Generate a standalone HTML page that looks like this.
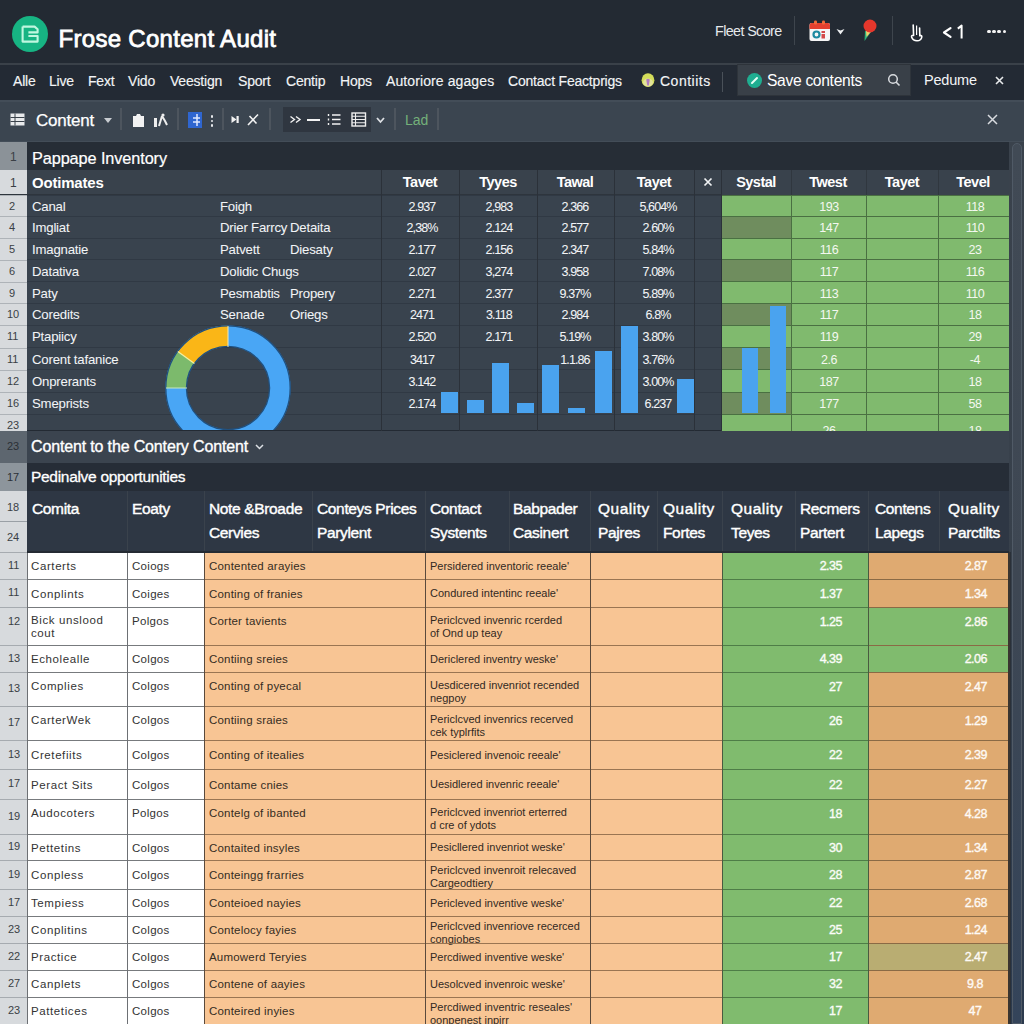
<!DOCTYPE html><html><head><meta charset="utf-8"><style>
*{margin:0;padding:0;box-sizing:border-box}
html,body{width:1024px;height:1024px;overflow:hidden;background:#232a33;font-family:"Liberation Sans",sans-serif;color:#fff}
.a{position:absolute}
.t{position:absolute;white-space:nowrap;line-height:1}
svg{position:absolute;overflow:visible}
</style></head><body>
<div class="a" style="left:0px;top:0px;width:1024px;height:64px;background:#232a33;"></div>
<div class="a" style="left:12px;top:16px;width:36px;height:36px;background:#17b483;border-radius:50%"></div>
<svg style="left:12px;top:16px" width="36" height="36" viewBox="0 0 36 36"><path d="M10.6 10.6 H22.6 L25.6 13.2 V16.4 H16.4 M16.4 20 H25.6 V25.6 H10.6 V10.6" fill="none" stroke="#c0f7e0" stroke-width="2.1" stroke-linejoin="round"/></svg>
<div class="t" style="left:58.5px;top:27px;font-size:24px;color:#fff;letter-spacing:0.3px;-webkit-text-stroke:0.8px #fff">Frose Content Audit</div>
<div class="t" style="left:715px;top:24px;font-size:14.3px;color:#e6e9ec;letter-spacing:-0.6px">Fleet Score</div>
<div class="a" style="left:794px;top:16px;width:1px;height:29px;background:#3e454d;"></div>
<div class="a" style="left:892px;top:16px;width:1px;height:29px;background:#3e454d;"></div>
<svg style="left:808px;top:19px" width="24" height="23" viewBox="0 0 24 23"><rect x="1.5" y="4" width="20.5" height="18" rx="2" fill="#f6f6f6"/><path d="M1.5 10 V6 A2 2 0 0 1 3.5 4 H20 A2 2 0 0 1 22 6 V10 Z" fill="#e5402f"/><rect x="6" y="1.5" width="3" height="4" rx="1.2" fill="#ef6a3a"/><rect x="14" y="1.5" width="3" height="4" rx="1.2" fill="#ef6a3a"/><circle cx="8.5" cy="15.5" r="3" fill="none" stroke="#1e8aa0" stroke-width="2.2"/><rect x="13.5" y="12" width="3.5" height="2" fill="#d44a4a"/><rect x="13.5" y="15" width="3.5" height="4.5" fill="#d44a4a"/></svg>
<svg style="left:836px;top:28px" width="9" height="7" viewBox="0 0 9 7"><path d="M0.5 1 L4.5 2.5 L8.5 1 L4.5 6.5 Z" fill="#eef0f2"/></svg>
<svg style="left:862px;top:18px" width="16" height="25" viewBox="0 0 16 25"><path d="M3 13 L2.5 23 L9 14 Z" fill="#2cb07a"/><path d="M4 13 L4.5 19 L9.5 13 Z" fill="#f0d070"/><circle cx="8" cy="8" r="6.5" fill="#e5372c"/></svg>
<svg style="left:900px;top:15px" width="30" height="32" viewBox="900 15 30 32"><path d="M913.2 25 L913.6 35.5 Q911.2 35 911.6 37 Q913 40.8 917 40.8 Q921.2 40.8 921.8 37 Q922 35.2 919.8 35.8 L919.6 28" fill="none" stroke="#fff" stroke-width="1.6" stroke-linecap="round" stroke-linejoin="round"/><path d="M916.6 25.5 V35" stroke="#fff" stroke-width="1.2"/></svg>
<svg style="left:942px;top:27px" width="10" height="11" viewBox="0 0 10 11"><path d="M8.5 1.2 L2 5.5 L8.5 9.8" fill="none" stroke="#fff" stroke-width="2.2" stroke-linejoin="round" stroke-linecap="round"/></svg>
<svg style="left:950px;top:20px" width="20" height="22" viewBox="950 20 20 22"><path d="M957.8 28.6 L961.6 25.6 V38.4" fill="none" stroke="#fff" stroke-width="2" stroke-linejoin="round"/></svg>
<div class="a" style="left:987.0px;top:29.6px;width:3.6px;height:3.6px;background:#f4f4f4;border-radius:50%"></div>
<div class="a" style="left:992.2px;top:29.6px;width:3.6px;height:3.6px;background:#f4f4f4;border-radius:50%"></div>
<div class="a" style="left:997.4px;top:29.6px;width:3.6px;height:3.6px;background:#f4f4f4;border-radius:50%"></div>
<div class="a" style="left:1002.6px;top:29.6px;width:3.6px;height:3.6px;background:#f4f4f4;border-radius:50%"></div>
<div class="a" style="left:0px;top:64px;width:1024px;height:36px;background:#232a34;"></div>
<div class="a" style="left:0px;top:63px;width:1024px;height:2px;background:#3a4149;"></div>
<div class="t" style="left:13px;top:74px;font-size:14px;color:#f2f4f6;letter-spacing:-0.2px;-webkit-text-stroke:0.15px #f2f4f6">Alle</div>
<div class="t" style="left:49px;top:74px;font-size:14px;color:#f2f4f6;letter-spacing:-0.2px;-webkit-text-stroke:0.15px #f2f4f6">Live</div>
<div class="t" style="left:88px;top:74px;font-size:14px;color:#f2f4f6;letter-spacing:-0.2px;-webkit-text-stroke:0.15px #f2f4f6">Fext</div>
<div class="t" style="left:128px;top:74px;font-size:14px;color:#f2f4f6;letter-spacing:-0.2px;-webkit-text-stroke:0.15px #f2f4f6">Vido</div>
<div class="t" style="left:170px;top:74px;font-size:14px;color:#f2f4f6;letter-spacing:-0.2px;-webkit-text-stroke:0.15px #f2f4f6">Veestign</div>
<div class="t" style="left:238px;top:74px;font-size:14px;color:#f2f4f6;letter-spacing:-0.2px;-webkit-text-stroke:0.15px #f2f4f6">Sport</div>
<div class="t" style="left:286px;top:74px;font-size:14px;color:#f2f4f6;letter-spacing:-0.2px;-webkit-text-stroke:0.15px #f2f4f6">Centip</div>
<div class="t" style="left:340px;top:74px;font-size:14px;color:#f2f4f6;letter-spacing:-0.2px;-webkit-text-stroke:0.15px #f2f4f6">Hops</div>
<div class="t" style="left:386px;top:74px;font-size:14px;color:#f2f4f6;letter-spacing:0.1px;-webkit-text-stroke:0.15px #f2f4f6">Autoriore agages</div>
<div class="t" style="left:508px;top:74px;font-size:14px;color:#f2f4f6;letter-spacing:-0.2px;-webkit-text-stroke:0.15px #f2f4f6">Contact Feactprigs</div>
<svg style="left:641px;top:73px" width="14" height="15" viewBox="0 0 14 15"><ellipse cx="7" cy="7.2" rx="6.4" ry="6.9" fill="#d3dc5a"/><ellipse cx="7" cy="9.5" rx="5" ry="4" fill="#e3e39a"/><path d="M5.2 6.5 Q7 5 8.8 6.5 L7.8 12.5 H6.3 Z" fill="#b07cc0"/></svg>
<div class="t" style="left:660px;top:74px;font-size:14px;color:#f2f4f6;letter-spacing:0.5px;-webkit-text-stroke:0.15px #f2f4f6">Contiits</div>
<div class="a" style="left:722px;top:72px;width:1px;height:20px;background:#4a5159;"></div>
<div class="a" style="left:737px;top:64px;width:174px;height:32px;background:#394048;border:1px solid #2e343b"></div>
<div class="a" style="left:747px;top:73px;width:15px;height:15px;background:#1fae91;border-radius:50%"></div>
<svg style="left:747px;top:73px" width="15" height="15" viewBox="0 0 15 15"><path d="M5 10 L10 5" stroke="#e8fff6" stroke-width="2" stroke-linecap="round"/></svg>
<div class="t" style="left:767px;top:73px;font-size:15.6px;color:#fff;letter-spacing:-0.3px">Save contents</div>
<svg style="left:887px;top:73px" width="14" height="14" viewBox="0 0 14 14"><circle cx="6" cy="6" r="4.3" fill="none" stroke="#d8dbdf" stroke-width="1.5"/><path d="M9 9 L12.5 12.5" stroke="#d8dbdf" stroke-width="1.6"/></svg>
<div class="t" style="left:924px;top:73px;font-size:14.5px;color:#f2f4f6;letter-spacing:-0.2px">Pedume</div>
<svg style="left:995px;top:76px" width="9" height="9" viewBox="0 0 9 9"><path d="M1 1 L8 8 M8 1 L1 8" stroke="#e8eaec" stroke-width="1.6"/></svg>
<div class="a" style="left:0px;top:100px;width:1024px;height:42px;background:#3b4550;"></div>
<div class="a" style="left:0px;top:100px;width:1024px;height:1.5px;background:#434d58;"></div>
<div class="a" style="left:0px;top:140.5px;width:1024px;height:1.5px;background:#434d58;"></div>
<svg style="left:10px;top:113px" width="15" height="13" viewBox="0 0 15 13"><rect x="0.5" y="0.5" width="14" height="12" fill="#e8eaec"/><path d="M0.5 4.5 H14.5 M0.5 8.5 H14.5 M5 0.5 V12.5" stroke="#3a424b" stroke-width="1"/></svg>
<div class="t" style="left:36px;top:112px;font-size:17px;color:#fff;letter-spacing:-0.2px;-webkit-text-stroke:0.25px #fff">Content</div>
<svg style="left:104px;top:118px" width="8" height="5" viewBox="0 0 8 5"><path d="M0 0 H8 L4 5 Z" fill="#c8ccd1"/></svg>
<div class="a" style="left:120px;top:108px;width:1.5px;height:22px;background:#4d555e;"></div>
<div class="a" style="left:177px;top:108px;width:1.5px;height:22px;background:#4d555e;"></div>
<div class="a" style="left:222px;top:108px;width:1.5px;height:22px;background:#4d555e;"></div>
<div class="a" style="left:269px;top:108px;width:1.5px;height:22px;background:#4d555e;"></div>
<div class="a" style="left:394px;top:108px;width:1.5px;height:22px;background:#4d555e;"></div>
<div class="a" style="left:437px;top:108px;width:1.5px;height:22px;background:#4d555e;"></div>
<svg style="left:132px;top:113px" width="13" height="14" viewBox="0 0 13 14"><path d="M1 3 H4 L5 1 H8 L9 3 H12 V14 H1 Z" fill="#f2f2f2"/></svg>
<svg style="left:153px;top:113px" width="16" height="14" viewBox="0 0 16 14"><rect x="1" y="5" width="3" height="9" fill="#eee"/><path d="M6 13 L9 3 M9 3 L12 8 L14 12" stroke="#eee" stroke-width="2" fill="none"/><circle cx="10" cy="2" r="1.6" fill="#eee"/></svg>
<svg style="left:188px;top:112px" width="15" height="16" viewBox="0 0 15 16"><rect x="0" y="0" width="14" height="16" fill="#2f66d0"/><path d="M9 2 V14 M5 6 H12 M5 10 H12" stroke="#dfe8ff" stroke-width="1.5"/></svg>
<div class="a" style="left:210.5px;top:115.0px;width:2.5px;height:2.5px;background:#e8eaec;border-radius:50%"></div>
<div class="a" style="left:210.5px;top:119.5px;width:2.5px;height:2.5px;background:#e8eaec;border-radius:50%"></div>
<div class="a" style="left:210.5px;top:124.0px;width:2.5px;height:2.5px;background:#e8eaec;border-radius:50%"></div>
<svg style="left:231px;top:115px" width="9" height="9" viewBox="0 0 9 9"><path d="M0.5 1 L5.5 4.5 L0.5 8 Z" fill="#f2f2f2"/><rect x="5.5" y="1" width="2.2" height="7" fill="#f2f2f2"/></svg>
<svg style="left:247px;top:113px" width="12" height="13" viewBox="0 0 12 13"><path d="M1 12 L11 1.5 M2.5 3 L9.5 10.5" stroke="#f2f2f2" stroke-width="1.6"/></svg>
<div class="a" style="left:283px;top:107px;width:88px;height:25px;background:#2f3640;"></div>
<svg style="left:289px;top:115px" width="14" height="9" viewBox="0 0 14 9"><path d="M1.5 1.5 L5.5 4.5 L1.5 7.5 M7 1.5 L11 4.5 L7 7.5" fill="none" stroke="#f2f2f2" stroke-width="1.4"/></svg>
<div class="a" style="left:307px;top:119px;width:13px;height:1.6px;background:#f2f2f2;"></div>
<svg style="left:327px;top:113px" width="15" height="13" viewBox="0 0 15 13"><path d="M5 2 H13.5 M5 6.5 H13.5 M5 11 H13.5" stroke="#f2f2f2" stroke-width="1.3"/><path d="M1.5 1 V3 M1.5 5.5 V7.5 M1.5 10 V12" stroke="#f2f2f2" stroke-width="1.4"/></svg>
<svg style="left:351px;top:112px" width="16" height="15" viewBox="0 0 16 15"><rect x="1" y="1" width="13.5" height="13" fill="none" stroke="#eeeeee" stroke-width="1.4"/><path d="M1 4.2 H14.5 M1 7.5 H14.5 M1 10.8 H14.5 M4.5 1 V14" stroke="#eeeeee" stroke-width="1.1"/></svg>
<svg style="left:376px;top:117px" width="9" height="6" viewBox="0 0 9 6"><path d="M1 1 L4.5 5 L8 1" fill="none" stroke="#dde0e4" stroke-width="1.8"/></svg>
<div class="t" style="left:405px;top:113px;font-size:14px;color:#74b07a;">Lad</div>
<svg style="left:987px;top:114px" width="11" height="11" viewBox="0 0 11 11"><path d="M1 1 L10 10 M10 1 L1 10" stroke="#d8dbdf" stroke-width="1.5"/></svg>
<div class="a" style="left:0px;top:142px;width:1009px;height:28px;background:#262d36;"></div>
<div class="a" style="left:0px;top:142px;width:27px;height:28px;background:#8b9298;"></div>
<div class="t" style="left:10px;top:151px;font-size:12px;color:#3a3f45;">1</div>
<div class="t" style="left:32px;top:150px;font-size:16.3px;color:#fff;letter-spacing:-0.1px;-webkit-text-stroke:0.2px #fff">Pappape Inventory</div>
<div class="a" style="left:27px;top:170px;width:695px;height:260px;background:#39434e;"></div>
<div class="a" style="left:27px;top:170px;width:695px;height:25px;background:#39424c;"></div>
<div class="a" style="left:0px;top:170px;width:27px;height:25px;background:#d7dadd;"></div>
<div class="t" style="left:32px;top:175px;font-size:15px;color:#fff;font-weight:bold;letter-spacing:-0.2px">Ootimates</div>
<div class="t" style="left:10px;top:177px;font-size:12px;color:#3a3f45;">1</div>
<div class="a" style="left:0px;top:195px;width:27px;height:21px;background:#d7dadd;"></div>
<div class="a" style="left:0px;top:195px;width:27px;height:1px;background:#aeb3b8;"></div>
<div class="t" style="left:9px;top:201px;font-size:11px;color:#3a3f45;">2</div>
<div class="a" style="left:27px;top:194.5px;width:695px;height:1.2px;background:#303944;"></div>
<div class="a" style="left:0px;top:216px;width:27px;height:22px;background:#d7dadd;"></div>
<div class="a" style="left:0px;top:216px;width:27px;height:1px;background:#aeb3b8;"></div>
<div class="t" style="left:9px;top:222px;font-size:11px;color:#3a3f45;">4</div>
<div class="a" style="left:27px;top:215.5px;width:695px;height:1.2px;background:#303944;"></div>
<div class="a" style="left:0px;top:238px;width:27px;height:21.5px;background:#d7dadd;"></div>
<div class="a" style="left:0px;top:238px;width:27px;height:1px;background:#aeb3b8;"></div>
<div class="t" style="left:9px;top:244px;font-size:11px;color:#3a3f45;">5</div>
<div class="a" style="left:27px;top:237.5px;width:695px;height:1.2px;background:#303944;"></div>
<div class="a" style="left:0px;top:259.5px;width:27px;height:22.0px;background:#d7dadd;"></div>
<div class="a" style="left:0px;top:259.5px;width:27px;height:1px;background:#aeb3b8;"></div>
<div class="t" style="left:9px;top:265.5px;font-size:11px;color:#3a3f45;">6</div>
<div class="a" style="left:27px;top:259.0px;width:695px;height:1.2px;background:#303944;"></div>
<div class="a" style="left:0px;top:281.5px;width:27px;height:21.5px;background:#d7dadd;"></div>
<div class="a" style="left:0px;top:281.5px;width:27px;height:1px;background:#aeb3b8;"></div>
<div class="t" style="left:9px;top:287.5px;font-size:11px;color:#3a3f45;">9</div>
<div class="a" style="left:27px;top:281.0px;width:695px;height:1.2px;background:#303944;"></div>
<div class="a" style="left:0px;top:303px;width:27px;height:22px;background:#d7dadd;"></div>
<div class="a" style="left:0px;top:303px;width:27px;height:1px;background:#aeb3b8;"></div>
<div class="t" style="left:7px;top:309px;font-size:11px;color:#3a3f45;">10</div>
<div class="a" style="left:27px;top:302.5px;width:695px;height:1.2px;background:#303944;"></div>
<div class="a" style="left:0px;top:325px;width:27px;height:22.5px;background:#d7dadd;"></div>
<div class="a" style="left:0px;top:325px;width:27px;height:1px;background:#aeb3b8;"></div>
<div class="t" style="left:7px;top:331px;font-size:11px;color:#3a3f45;">11</div>
<div class="a" style="left:27px;top:324.5px;width:695px;height:1.2px;background:#303944;"></div>
<div class="a" style="left:0px;top:347.5px;width:27px;height:22.0px;background:#d7dadd;"></div>
<div class="a" style="left:0px;top:347.5px;width:27px;height:1px;background:#aeb3b8;"></div>
<div class="t" style="left:7px;top:353.5px;font-size:11px;color:#3a3f45;">11</div>
<div class="a" style="left:27px;top:347.0px;width:695px;height:1.2px;background:#303944;"></div>
<div class="a" style="left:0px;top:369.5px;width:27px;height:22.5px;background:#d7dadd;"></div>
<div class="a" style="left:0px;top:369.5px;width:27px;height:1px;background:#aeb3b8;"></div>
<div class="t" style="left:7px;top:375.5px;font-size:11px;color:#3a3f45;">12</div>
<div class="a" style="left:27px;top:369.0px;width:695px;height:1.2px;background:#303944;"></div>
<div class="a" style="left:0px;top:392px;width:27px;height:22px;background:#d7dadd;"></div>
<div class="a" style="left:0px;top:392px;width:27px;height:1px;background:#aeb3b8;"></div>
<div class="t" style="left:7px;top:398px;font-size:11px;color:#3a3f45;">16</div>
<div class="a" style="left:27px;top:391.5px;width:695px;height:1.2px;background:#303944;"></div>
<div class="a" style="left:0px;top:414px;width:27px;height:17px;background:#d7dadd;"></div>
<div class="a" style="left:0px;top:414px;width:27px;height:1px;background:#aeb3b8;"></div>
<div class="t" style="left:7px;top:420px;font-size:11px;color:#3a3f45;">23</div>
<div class="a" style="left:27px;top:413.5px;width:695px;height:1.2px;background:#303944;"></div>
<div class="a" style="left:0px;top:194px;width:1009px;height:1px;background:#2e353d;"></div>
<div class="a" style="left:381px;top:170px;width:1.2px;height:261px;background:#2b3139;"></div>
<div class="a" style="left:459px;top:170px;width:1.2px;height:261px;background:#2b3139;"></div>
<div class="a" style="left:537px;top:170px;width:1.2px;height:261px;background:#2b3139;"></div>
<div class="a" style="left:614px;top:170px;width:1.2px;height:261px;background:#2b3139;"></div>
<div class="a" style="left:694px;top:170px;width:1.2px;height:261px;background:#2b3139;"></div>
<div class="a" style="left:721px;top:170px;width:1.2px;height:261px;background:#2b3139;"></div>
<div class="t" style="left:320px;width:200px;text-align:center;top:175px;font-size:14.5px;color:#fff;font-weight:bold;letter-spacing:-0.5px">Tavet</div>
<div class="t" style="left:398px;width:200px;text-align:center;top:175px;font-size:14.5px;color:#fff;font-weight:bold;letter-spacing:-0.5px">Tyyes</div>
<div class="t" style="left:475px;width:200px;text-align:center;top:175px;font-size:14.5px;color:#fff;font-weight:bold;letter-spacing:-0.5px">Tawal</div>
<div class="t" style="left:554px;width:200px;text-align:center;top:175px;font-size:14.5px;color:#fff;font-weight:bold;letter-spacing:-0.5px">Tayet</div>
<svg style="left:703px;top:177px" width="10" height="10" viewBox="0 0 10 10"><path d="M1.5 1.5 L8.5 8.5 M8.5 1.5 L1.5 8.5" stroke="#f0f2f4" stroke-width="1.7"/></svg>
<div class="t" style="left:32px;top:200px;font-size:13.2px;color:#f2f4f6;letter-spacing:-0.2px;-webkit-text-stroke:0.05px #f2f4f6">Canal</div>
<div class="t" style="left:32px;top:221px;font-size:13.2px;color:#f2f4f6;letter-spacing:-0.2px;-webkit-text-stroke:0.05px #f2f4f6">Imgliat</div>
<div class="t" style="left:32px;top:243px;font-size:13.2px;color:#f2f4f6;letter-spacing:-0.2px;-webkit-text-stroke:0.05px #f2f4f6">Imagnatie</div>
<div class="t" style="left:32px;top:264.5px;font-size:13.2px;color:#f2f4f6;letter-spacing:-0.2px;-webkit-text-stroke:0.05px #f2f4f6">Datativa</div>
<div class="t" style="left:32px;top:286.5px;font-size:13.2px;color:#f2f4f6;letter-spacing:-0.2px;-webkit-text-stroke:0.05px #f2f4f6">Paty</div>
<div class="t" style="left:32px;top:308px;font-size:13.2px;color:#f2f4f6;letter-spacing:-0.2px;-webkit-text-stroke:0.05px #f2f4f6">Coredits</div>
<div class="t" style="left:32px;top:330px;font-size:13.2px;color:#f2f4f6;letter-spacing:-0.2px;-webkit-text-stroke:0.05px #f2f4f6">Ptapiicy</div>
<div class="t" style="left:32px;top:352.5px;font-size:13.2px;color:#f2f4f6;letter-spacing:-0.2px;-webkit-text-stroke:0.05px #f2f4f6">Corent tafanice</div>
<div class="t" style="left:32px;top:374.5px;font-size:13.2px;color:#f2f4f6;letter-spacing:-0.2px;-webkit-text-stroke:0.05px #f2f4f6">Onprerants</div>
<div class="t" style="left:32px;top:397px;font-size:13.2px;color:#f2f4f6;letter-spacing:-0.2px;-webkit-text-stroke:0.05px #f2f4f6">Smeprists</div>
<div class="t" style="left:220px;top:200px;font-size:13.2px;color:#f2f4f6;letter-spacing:-0.2px;-webkit-text-stroke:0.05px #f2f4f6">Foigh</div>
<div class="t" style="left:220px;top:221px;font-size:13.2px;color:#f2f4f6;letter-spacing:-0.2px;-webkit-text-stroke:0.05px #f2f4f6">Drier Farrcy</div>
<div class="t" style="left:290px;top:221px;font-size:13.2px;color:#f2f4f6;letter-spacing:-0.2px;-webkit-text-stroke:0.05px #f2f4f6">Detaita</div>
<div class="t" style="left:220px;top:243px;font-size:13.2px;color:#f2f4f6;letter-spacing:-0.2px;-webkit-text-stroke:0.05px #f2f4f6">Patvett</div>
<div class="t" style="left:290px;top:243px;font-size:13.2px;color:#f2f4f6;letter-spacing:-0.2px;-webkit-text-stroke:0.05px #f2f4f6">Diesaty</div>
<div class="t" style="left:220px;top:264.5px;font-size:13.2px;color:#f2f4f6;letter-spacing:-0.2px;-webkit-text-stroke:0.05px #f2f4f6">Dolidic Chugs</div>
<div class="t" style="left:220px;top:286.5px;font-size:13.2px;color:#f2f4f6;letter-spacing:-0.2px;-webkit-text-stroke:0.05px #f2f4f6">Pesmabtis</div>
<div class="t" style="left:290px;top:286.5px;font-size:13.2px;color:#f2f4f6;letter-spacing:-0.2px;-webkit-text-stroke:0.05px #f2f4f6">Propery</div>
<div class="t" style="left:220px;top:308px;font-size:13.2px;color:#f2f4f6;letter-spacing:-0.2px;-webkit-text-stroke:0.05px #f2f4f6">Senade</div>
<div class="t" style="left:290px;top:308px;font-size:13.2px;color:#f2f4f6;letter-spacing:-0.2px;-webkit-text-stroke:0.05px #f2f4f6">Oriegs</div>
<div class="t" style="left:322px;width:200px;text-align:center;top:201px;font-size:12.5px;color:#f2f4f6;letter-spacing:-0.9px;-webkit-text-stroke:0.05px #f2f4f6">2.937</div>
<div class="t" style="left:399px;width:200px;text-align:center;top:201px;font-size:12.5px;color:#f2f4f6;letter-spacing:-0.9px;-webkit-text-stroke:0.05px #f2f4f6">2,983</div>
<div class="t" style="left:475px;width:200px;text-align:center;top:201px;font-size:12.5px;color:#f2f4f6;letter-spacing:-0.9px;-webkit-text-stroke:0.05px #f2f4f6">2.366</div>
<div class="t" style="left:558px;width:200px;text-align:center;top:201px;font-size:12.5px;color:#f2f4f6;letter-spacing:-0.9px;-webkit-text-stroke:0.05px #f2f4f6">5,604%</div>
<div class="t" style="left:322px;width:200px;text-align:center;top:222px;font-size:12.5px;color:#f2f4f6;letter-spacing:-0.9px;-webkit-text-stroke:0.05px #f2f4f6">2,38%</div>
<div class="t" style="left:399px;width:200px;text-align:center;top:222px;font-size:12.5px;color:#f2f4f6;letter-spacing:-0.9px;-webkit-text-stroke:0.05px #f2f4f6">2.124</div>
<div class="t" style="left:475px;width:200px;text-align:center;top:222px;font-size:12.5px;color:#f2f4f6;letter-spacing:-0.9px;-webkit-text-stroke:0.05px #f2f4f6">2.577</div>
<div class="t" style="left:558px;width:200px;text-align:center;top:222px;font-size:12.5px;color:#f2f4f6;letter-spacing:-0.9px;-webkit-text-stroke:0.05px #f2f4f6">2.60%</div>
<div class="t" style="left:322px;width:200px;text-align:center;top:244px;font-size:12.5px;color:#f2f4f6;letter-spacing:-0.9px;-webkit-text-stroke:0.05px #f2f4f6">2.177</div>
<div class="t" style="left:399px;width:200px;text-align:center;top:244px;font-size:12.5px;color:#f2f4f6;letter-spacing:-0.9px;-webkit-text-stroke:0.05px #f2f4f6">2.156</div>
<div class="t" style="left:475px;width:200px;text-align:center;top:244px;font-size:12.5px;color:#f2f4f6;letter-spacing:-0.9px;-webkit-text-stroke:0.05px #f2f4f6">2.347</div>
<div class="t" style="left:558px;width:200px;text-align:center;top:244px;font-size:12.5px;color:#f2f4f6;letter-spacing:-0.9px;-webkit-text-stroke:0.05px #f2f4f6">5.84%</div>
<div class="t" style="left:322px;width:200px;text-align:center;top:265.5px;font-size:12.5px;color:#f2f4f6;letter-spacing:-0.9px;-webkit-text-stroke:0.05px #f2f4f6">2.027</div>
<div class="t" style="left:399px;width:200px;text-align:center;top:265.5px;font-size:12.5px;color:#f2f4f6;letter-spacing:-0.9px;-webkit-text-stroke:0.05px #f2f4f6">3,274</div>
<div class="t" style="left:475px;width:200px;text-align:center;top:265.5px;font-size:12.5px;color:#f2f4f6;letter-spacing:-0.9px;-webkit-text-stroke:0.05px #f2f4f6">3.958</div>
<div class="t" style="left:558px;width:200px;text-align:center;top:265.5px;font-size:12.5px;color:#f2f4f6;letter-spacing:-0.9px;-webkit-text-stroke:0.05px #f2f4f6">7.08%</div>
<div class="t" style="left:322px;width:200px;text-align:center;top:287.5px;font-size:12.5px;color:#f2f4f6;letter-spacing:-0.9px;-webkit-text-stroke:0.05px #f2f4f6">2.271</div>
<div class="t" style="left:399px;width:200px;text-align:center;top:287.5px;font-size:12.5px;color:#f2f4f6;letter-spacing:-0.9px;-webkit-text-stroke:0.05px #f2f4f6">2.377</div>
<div class="t" style="left:475px;width:200px;text-align:center;top:287.5px;font-size:12.5px;color:#f2f4f6;letter-spacing:-0.9px;-webkit-text-stroke:0.05px #f2f4f6">9.37%</div>
<div class="t" style="left:558px;width:200px;text-align:center;top:287.5px;font-size:12.5px;color:#f2f4f6;letter-spacing:-0.9px;-webkit-text-stroke:0.05px #f2f4f6">5.89%</div>
<div class="t" style="left:322px;width:200px;text-align:center;top:309px;font-size:12.5px;color:#f2f4f6;letter-spacing:-0.9px;-webkit-text-stroke:0.05px #f2f4f6">2471</div>
<div class="t" style="left:399px;width:200px;text-align:center;top:309px;font-size:12.5px;color:#f2f4f6;letter-spacing:-0.9px;-webkit-text-stroke:0.05px #f2f4f6">3.118</div>
<div class="t" style="left:475px;width:200px;text-align:center;top:309px;font-size:12.5px;color:#f2f4f6;letter-spacing:-0.9px;-webkit-text-stroke:0.05px #f2f4f6">2.984</div>
<div class="t" style="left:558px;width:200px;text-align:center;top:309px;font-size:12.5px;color:#f2f4f6;letter-spacing:-0.9px;-webkit-text-stroke:0.05px #f2f4f6">6.8%</div>
<div class="t" style="left:322px;width:200px;text-align:center;top:331px;font-size:12.5px;color:#f2f4f6;letter-spacing:-0.9px;-webkit-text-stroke:0.05px #f2f4f6">2.520</div>
<div class="t" style="left:399px;width:200px;text-align:center;top:331px;font-size:12.5px;color:#f2f4f6;letter-spacing:-0.9px;-webkit-text-stroke:0.05px #f2f4f6">2.171</div>
<div class="t" style="left:475px;width:200px;text-align:center;top:331px;font-size:12.5px;color:#f2f4f6;letter-spacing:-0.9px;-webkit-text-stroke:0.05px #f2f4f6">5.19%</div>
<div class="t" style="left:558px;width:200px;text-align:center;top:331px;font-size:12.5px;color:#f2f4f6;letter-spacing:-0.9px;-webkit-text-stroke:0.05px #f2f4f6">3.80%</div>
<div class="t" style="left:322px;width:200px;text-align:center;top:353.5px;font-size:12.5px;color:#f2f4f6;letter-spacing:-0.9px;-webkit-text-stroke:0.05px #f2f4f6">3417</div>
<div class="t" style="left:475px;width:200px;text-align:center;top:353.5px;font-size:12.5px;color:#f2f4f6;letter-spacing:-0.9px;-webkit-text-stroke:0.05px #f2f4f6">1.1.86</div>
<div class="t" style="left:558px;width:200px;text-align:center;top:353.5px;font-size:12.5px;color:#f2f4f6;letter-spacing:-0.9px;-webkit-text-stroke:0.05px #f2f4f6">3.76%</div>
<div class="t" style="left:322px;width:200px;text-align:center;top:375.5px;font-size:12.5px;color:#f2f4f6;letter-spacing:-0.9px;-webkit-text-stroke:0.05px #f2f4f6">3.142</div>
<div class="t" style="left:558px;width:200px;text-align:center;top:375.5px;font-size:12.5px;color:#f2f4f6;letter-spacing:-0.9px;-webkit-text-stroke:0.05px #f2f4f6">3.00%</div>
<div class="t" style="left:322px;width:200px;text-align:center;top:398px;font-size:12.5px;color:#f2f4f6;letter-spacing:-0.9px;-webkit-text-stroke:0.05px #f2f4f6">2.174</div>
<div class="t" style="left:558px;width:200px;text-align:center;top:398px;font-size:12.5px;color:#f2f4f6;letter-spacing:-0.9px;-webkit-text-stroke:0.05px #f2f4f6">6.237</div>
<div class="a" style="left:27px;top:170px;width:695px;height:260px;overflow:hidden"><svg style="left:139px;top:156px" width="124" height="124" viewBox="-62 -62 124 124"><circle r="52" fill="none" stroke="#49a6f5" stroke-width="21"/><path d="M -52 0 A 52 52 0 0 1 -42.1 -30.6" fill="none" stroke="#7cba6c" stroke-width="21"/><path d="M -42.1 -30.6 A 52 52 0 0 1 0 -52" fill="none" stroke="#fab617" stroke-width="21"/><circle r="62.2" fill="none" stroke="#21507e" stroke-width="1.3"/><circle r="41.6" fill="none" stroke="#21507e" stroke-width="1.3"/><path d="M -62 0 H -41" stroke="#c8e8c0" stroke-width="1"/><path d="M -50.2 -36.5 L -33.6 -24.4" stroke="#f5f0a0" stroke-width="1.2"/><path d="M 0 -62 V -41" stroke="#f5e8b0" stroke-width="1"/></svg></div>
<div class="a" style="left:441px;top:392px;width:16.5px;height:21px;background:#4aa3ef;"></div>
<div class="a" style="left:467px;top:400px;width:16.5px;height:13px;background:#4aa3ef;"></div>
<div class="a" style="left:492px;top:363px;width:16.5px;height:50px;background:#4aa3ef;"></div>
<div class="a" style="left:517px;top:403px;width:16.5px;height:10px;background:#4aa3ef;"></div>
<div class="a" style="left:542px;top:365px;width:16.5px;height:48px;background:#4aa3ef;"></div>
<div class="a" style="left:568px;top:408px;width:16.5px;height:5px;background:#4aa3ef;"></div>
<div class="a" style="left:595px;top:351px;width:16.5px;height:62px;background:#4aa3ef;"></div>
<div class="a" style="left:621px;top:326px;width:16.5px;height:87px;background:#4aa3ef;"></div>
<div class="a" style="left:677px;top:379px;width:16.5px;height:34px;background:#4aa3ef;"></div>
<div class="a" style="left:722px;top:170px;width:287px;height:25px;background:#39424c;"></div>
<div class="t" style="left:656px;width:200px;text-align:center;top:175px;font-size:14.5px;color:#fff;font-weight:bold;letter-spacing:-0.5px">Systal</div>
<div class="t" style="left:728px;width:200px;text-align:center;top:175px;font-size:14.5px;color:#fff;font-weight:bold;letter-spacing:-0.5px">Twest</div>
<div class="t" style="left:802px;width:200px;text-align:center;top:175px;font-size:14.5px;color:#fff;font-weight:bold;letter-spacing:-0.5px">Tayet</div>
<div class="t" style="left:873px;width:200px;text-align:center;top:175px;font-size:14.5px;color:#fff;font-weight:bold;letter-spacing:-0.5px">Tevel</div>
<div class="a" style="left:791px;top:170px;width:1px;height:25px;background:#30373f;"></div>
<div class="a" style="left:866px;top:170px;width:1px;height:25px;background:#30373f;"></div>
<div class="a" style="left:938px;top:170px;width:1px;height:25px;background:#30373f;"></div>
<div class="a" style="left:722px;top:195px;width:287px;height:236px;background:#80ba6e;"></div>
<div class="a" style="left:722px;top:216px;width:69px;height:22px;background:#6f8d5e;"></div>
<div class="a" style="left:722px;top:259.5px;width:69px;height:22.0px;background:#6f8d5e;"></div>
<div class="a" style="left:722px;top:303px;width:69px;height:22px;background:#6f8d5e;"></div>
<div class="a" style="left:722px;top:347.5px;width:69px;height:22.0px;background:#6f8d5e;"></div>
<div class="a" style="left:722px;top:392px;width:69px;height:22px;background:#6f8d5e;"></div>
<div class="a" style="left:722px;top:194.5px;width:287px;height:1.3px;background:#4a7042;"></div>
<div class="a" style="left:722px;top:215.5px;width:287px;height:1.3px;background:#4a7042;"></div>
<div class="a" style="left:722px;top:237.5px;width:287px;height:1.3px;background:#4a7042;"></div>
<div class="a" style="left:722px;top:259.0px;width:287px;height:1.3px;background:#4a7042;"></div>
<div class="a" style="left:722px;top:281.0px;width:287px;height:1.3px;background:#4a7042;"></div>
<div class="a" style="left:722px;top:302.5px;width:287px;height:1.3px;background:#4a7042;"></div>
<div class="a" style="left:722px;top:324.5px;width:287px;height:1.3px;background:#4a7042;"></div>
<div class="a" style="left:722px;top:347.0px;width:287px;height:1.3px;background:#4a7042;"></div>
<div class="a" style="left:722px;top:369.0px;width:287px;height:1.3px;background:#4a7042;"></div>
<div class="a" style="left:722px;top:391.5px;width:287px;height:1.3px;background:#4a7042;"></div>
<div class="a" style="left:722px;top:413.5px;width:287px;height:1.3px;background:#4a7042;"></div>
<div class="a" style="left:791px;top:195px;width:1.3px;height:236px;background:#4a7042;"></div>
<div class="a" style="left:866px;top:195px;width:1.3px;height:236px;background:#4a7042;"></div>
<div class="a" style="left:938px;top:195px;width:1.3px;height:236px;background:#4a7042;"></div>
<div class="t" style="left:729px;width:200px;text-align:center;top:201px;font-size:12.5px;color:#f4f8f0;letter-spacing:-0.4px">193</div>
<div class="t" style="left:875px;width:200px;text-align:center;top:201px;font-size:12.5px;color:#f4f8f0;letter-spacing:-0.4px">118</div>
<div class="t" style="left:729px;width:200px;text-align:center;top:222px;font-size:12.5px;color:#f4f8f0;letter-spacing:-0.4px">147</div>
<div class="t" style="left:875px;width:200px;text-align:center;top:222px;font-size:12.5px;color:#f4f8f0;letter-spacing:-0.4px">110</div>
<div class="t" style="left:729px;width:200px;text-align:center;top:244px;font-size:12.5px;color:#f4f8f0;letter-spacing:-0.4px">116</div>
<div class="t" style="left:875px;width:200px;text-align:center;top:244px;font-size:12.5px;color:#f4f8f0;letter-spacing:-0.4px">23</div>
<div class="t" style="left:729px;width:200px;text-align:center;top:265.5px;font-size:12.5px;color:#f4f8f0;letter-spacing:-0.4px">117</div>
<div class="t" style="left:875px;width:200px;text-align:center;top:265.5px;font-size:12.5px;color:#f4f8f0;letter-spacing:-0.4px">116</div>
<div class="t" style="left:729px;width:200px;text-align:center;top:287.5px;font-size:12.5px;color:#f4f8f0;letter-spacing:-0.4px">113</div>
<div class="t" style="left:875px;width:200px;text-align:center;top:287.5px;font-size:12.5px;color:#f4f8f0;letter-spacing:-0.4px">110</div>
<div class="t" style="left:729px;width:200px;text-align:center;top:309px;font-size:12.5px;color:#f4f8f0;letter-spacing:-0.4px">117</div>
<div class="t" style="left:875px;width:200px;text-align:center;top:309px;font-size:12.5px;color:#f4f8f0;letter-spacing:-0.4px">18</div>
<div class="t" style="left:729px;width:200px;text-align:center;top:331px;font-size:12.5px;color:#f4f8f0;letter-spacing:-0.4px">119</div>
<div class="t" style="left:875px;width:200px;text-align:center;top:331px;font-size:12.5px;color:#f4f8f0;letter-spacing:-0.4px">29</div>
<div class="t" style="left:729px;width:200px;text-align:center;top:353.5px;font-size:12.5px;color:#f4f8f0;letter-spacing:-0.4px">2.6</div>
<div class="t" style="left:875px;width:200px;text-align:center;top:353.5px;font-size:12.5px;color:#f4f8f0;letter-spacing:-0.4px">-4</div>
<div class="t" style="left:729px;width:200px;text-align:center;top:375.5px;font-size:12.5px;color:#f4f8f0;letter-spacing:-0.4px">187</div>
<div class="t" style="left:875px;width:200px;text-align:center;top:375.5px;font-size:12.5px;color:#f4f8f0;letter-spacing:-0.4px">18</div>
<div class="t" style="left:729px;width:200px;text-align:center;top:398px;font-size:12.5px;color:#f4f8f0;letter-spacing:-0.4px">177</div>
<div class="t" style="left:875px;width:200px;text-align:center;top:398px;font-size:12.5px;color:#f4f8f0;letter-spacing:-0.4px">58</div>
<div class="t" style="left:729px;width:200px;text-align:center;top:425px;font-size:12.5px;color:#f4f8f0;letter-spacing:-0.4px">26</div>
<div class="t" style="left:875px;width:200px;text-align:center;top:425px;font-size:12.5px;color:#f4f8f0;letter-spacing:-0.4px">18</div>
<div class="a" style="left:742px;top:348px;width:16px;height:65px;background:#4aa3ef;"></div>
<div class="a" style="left:770px;top:306px;width:16px;height:107px;background:#4aa3ef;"></div>
<div class="a" style="left:1009px;top:142px;width:15px;height:882px;background:linear-gradient(#3a424c,#37404b 50%,#2c3a4d);"></div>
<div class="a" style="left:1009px;top:552px;width:2px;height:472px;background:#2a3038;"></div>
<div class="a" style="left:1012px;top:143px;width:10px;height:881px;background:linear-gradient(#414a55,#3e4753 50%,#34445a);border-radius:5px 5px 0 0;border:1px solid #505a66"></div>
<div class="a" style="left:0px;top:431px;width:1009px;height:32px;background:#3b444f;"></div>
<div class="a" style="left:0px;top:431px;width:27px;height:32px;background:#5d666f;"></div>
<div class="t" style="left:7px;top:441px;font-size:11px;color:#2b3036;">23</div>
<div class="t" style="left:31px;top:439px;font-size:16px;color:#fff;letter-spacing:-0.15px;-webkit-text-stroke:0.35px #fff">Content to the Contery Content</div>
<svg style="left:255px;top:444px" width="9" height="6" viewBox="0 0 9 6"><path d="M1 1 L4.5 4.5 L8 1" fill="none" stroke="#dde0e4" stroke-width="1.5"/></svg>
<div class="a" style="left:0px;top:463px;width:1009px;height:28px;background:#262d37;"></div>
<div class="a" style="left:0px;top:463px;width:27px;height:28px;background:#8d959c;"></div>
<div class="t" style="left:7px;top:472px;font-size:11px;color:#2b3036;">17</div>
<div class="t" style="left:31px;top:469px;font-size:15.5px;color:#fff;letter-spacing:-0.3px;-webkit-text-stroke:0.3px #fff">Pedinalve opportunities</div>
<div class="a" style="left:0px;top:491px;width:1009px;height:61px;background:#2e3744;"></div>
<div class="a" style="left:0px;top:491px;width:27px;height:30px;background:#d7dadd;"></div>
<div class="a" style="left:0px;top:521px;width:27px;height:31px;background:#d7dadd;"></div>
<div class="a" style="left:0px;top:521px;width:27px;height:1px;background:#9aa0a6;"></div>
<div class="t" style="left:7px;top:502px;font-size:11px;color:#3a3f45;">18</div>
<div class="t" style="left:7px;top:532px;font-size:11px;color:#3a3f45;">24</div>
<div class="a" style="left:127px;top:491px;width:1px;height:61px;background:#3a424c;"></div>
<div class="a" style="left:204px;top:491px;width:1px;height:61px;background:#3a424c;"></div>
<div class="a" style="left:312px;top:491px;width:1px;height:61px;background:#3a424c;"></div>
<div class="a" style="left:425px;top:491px;width:1px;height:61px;background:#3a424c;"></div>
<div class="a" style="left:509px;top:491px;width:1px;height:61px;background:#3a424c;"></div>
<div class="a" style="left:590px;top:491px;width:1px;height:61px;background:#3a424c;"></div>
<div class="a" style="left:657px;top:491px;width:1px;height:61px;background:#3a424c;"></div>
<div class="a" style="left:722px;top:491px;width:1px;height:61px;background:#3a424c;"></div>
<div class="a" style="left:795px;top:491px;width:1px;height:61px;background:#3a424c;"></div>
<div class="a" style="left:868px;top:491px;width:1px;height:61px;background:#3a424c;"></div>
<div class="a" style="left:939px;top:491px;width:1px;height:61px;background:#3a424c;"></div>
<div class="t" style="left:32px;top:501px;font-size:15.5px;color:#fff;letter-spacing:-0.35px;-webkit-text-stroke:0.4px #fff">Comita</div>
<div class="t" style="left:132px;top:501px;font-size:15.5px;color:#fff;letter-spacing:-0.35px;-webkit-text-stroke:0.4px #fff">Eoaty</div>
<div class="t" style="left:209px;top:501px;font-size:15.5px;color:#fff;letter-spacing:-0.35px;-webkit-text-stroke:0.4px #fff">Note &amp;Broade</div>
<div class="t" style="left:209px;top:525px;font-size:15.5px;color:#fff;letter-spacing:-0.35px;-webkit-text-stroke:0.4px #fff">Cervies</div>
<div class="t" style="left:317px;top:501px;font-size:15.5px;color:#fff;letter-spacing:-0.35px;-webkit-text-stroke:0.4px #fff">Conteys Prices</div>
<div class="t" style="left:317px;top:525px;font-size:15.5px;color:#fff;letter-spacing:-0.35px;-webkit-text-stroke:0.4px #fff">Parylent</div>
<div class="t" style="left:430px;top:501px;font-size:15.5px;color:#fff;letter-spacing:-0.35px;-webkit-text-stroke:0.4px #fff">Contact</div>
<div class="t" style="left:430px;top:525px;font-size:15.5px;color:#fff;letter-spacing:-0.35px;-webkit-text-stroke:0.4px #fff">Systents</div>
<div class="t" style="left:513px;top:501px;font-size:15.5px;color:#fff;letter-spacing:-0.35px;-webkit-text-stroke:0.4px #fff">Babpader</div>
<div class="t" style="left:513px;top:525px;font-size:15.5px;color:#fff;letter-spacing:-0.35px;-webkit-text-stroke:0.4px #fff">Casinert</div>
<div class="t" style="left:598px;top:501px;font-size:15.5px;color:#fff;letter-spacing:0.5px;-webkit-text-stroke:0.4px #fff">Quality</div>
<div class="t" style="left:598px;top:525px;font-size:15.5px;color:#fff;letter-spacing:-0.35px;-webkit-text-stroke:0.4px #fff">Pajres</div>
<div class="t" style="left:663px;top:501px;font-size:15.5px;color:#fff;letter-spacing:0.5px;-webkit-text-stroke:0.4px #fff">Quality</div>
<div class="t" style="left:663px;top:525px;font-size:15.5px;color:#fff;letter-spacing:-0.35px;-webkit-text-stroke:0.4px #fff">Fortes</div>
<div class="t" style="left:731px;top:501px;font-size:15.5px;color:#fff;letter-spacing:0.5px;-webkit-text-stroke:0.4px #fff">Quality</div>
<div class="t" style="left:731px;top:525px;font-size:15.5px;color:#fff;letter-spacing:-0.35px;-webkit-text-stroke:0.4px #fff">Teyes</div>
<div class="t" style="left:800px;top:501px;font-size:15.5px;color:#fff;letter-spacing:-0.35px;-webkit-text-stroke:0.4px #fff">Recmers</div>
<div class="t" style="left:800px;top:525px;font-size:15.5px;color:#fff;letter-spacing:-0.35px;-webkit-text-stroke:0.4px #fff">Partert</div>
<div class="t" style="left:875px;top:501px;font-size:15.5px;color:#fff;letter-spacing:-0.35px;-webkit-text-stroke:0.4px #fff">Contens</div>
<div class="t" style="left:875px;top:525px;font-size:15.5px;color:#fff;letter-spacing:-0.35px;-webkit-text-stroke:0.4px #fff">Lapegs</div>
<div class="t" style="left:948px;top:501px;font-size:15.5px;color:#fff;letter-spacing:0.5px;-webkit-text-stroke:0.4px #fff">Quality</div>
<div class="t" style="left:948px;top:525px;font-size:15.5px;color:#fff;letter-spacing:-0.35px;-webkit-text-stroke:0.4px #fff">Parctilts</div>
<div class="a" style="left:27px;top:552px;width:982px;height:472px;background:#fff;"></div>
<div class="a" style="left:204px;top:552px;width:518px;height:472px;background:#f8c594;"></div>
<div class="a" style="left:722px;top:552px;width:146px;height:472px;background:#80bb6e;"></div>
<div class="a" style="left:868px;top:552px;width:141px;height:472px;background:#dfaa71;"></div>
<div class="a" style="left:868px;top:607px;width:141px;height:65px;background:#80bb6e;"></div>
<div class="a" style="left:868px;top:943px;width:141px;height:27px;background:#b9ad72;"></div>
<div class="a" style="left:0px;top:552px;width:27px;height:27px;background:#d7dadd;"></div>
<div class="a" style="left:0px;top:552px;width:27px;height:1px;background:#a6abb0;"></div>
<div class="t" style="left:8px;top:560px;font-size:11px;color:#3a3f45;">11</div>
<div class="t" style="left:31px;top:561px;font-size:11.5px;color:#333;letter-spacing:0.6px">Carterts</div>
<div class="t" style="left:132px;top:561px;font-size:11.5px;color:#333;letter-spacing:0.3px">Coiogs</div>
<div class="t" style="left:209px;top:561px;font-size:11.5px;color:#352c22;letter-spacing:0.2px">Contented arayies</div>
<div class="t" style="left:430px;top:561px;font-size:11px;color:#32291f;">Persidered inventoric reeale'</div>
<div class="t" style="left:642px;width:200px;text-align:right;top:560px;font-size:12.5px;color:#f6faf2;letter-spacing:-0.5px;-webkit-text-stroke:0.35px #fff">2.35</div>
<div class="t" style="left:787px;width:200px;text-align:right;top:560px;font-size:12.5px;color:#fdf4ea;letter-spacing:-0.5px;-webkit-text-stroke:0.35px #fff">2.87</div>
<div class="a" style="left:0px;top:579px;width:27px;height:28px;background:#d7dadd;"></div>
<div class="a" style="left:0px;top:579px;width:27px;height:1px;background:#a6abb0;"></div>
<div class="t" style="left:8px;top:587px;font-size:11px;color:#3a3f45;">11</div>
<div class="t" style="left:31px;top:589px;font-size:11.5px;color:#333;letter-spacing:0.6px">Conplints</div>
<div class="t" style="left:132px;top:589px;font-size:11.5px;color:#333;letter-spacing:0.3px">Coiges</div>
<div class="t" style="left:209px;top:589px;font-size:11.5px;color:#352c22;letter-spacing:0.2px">Conting of franies</div>
<div class="t" style="left:430px;top:588px;font-size:11px;color:#32291f;">Condured intentinc reeale'</div>
<div class="t" style="left:642px;width:200px;text-align:right;top:588px;font-size:12.5px;color:#f6faf2;letter-spacing:-0.5px;-webkit-text-stroke:0.35px #fff">1.37</div>
<div class="t" style="left:787px;width:200px;text-align:right;top:588px;font-size:12.5px;color:#fdf4ea;letter-spacing:-0.5px;-webkit-text-stroke:0.35px #fff">1.34</div>
<div class="a" style="left:0px;top:607px;width:27px;height:38px;background:#d7dadd;"></div>
<div class="a" style="left:0px;top:607px;width:27px;height:1px;background:#a6abb0;"></div>
<div class="t" style="left:8px;top:616px;font-size:11px;color:#3a3f45;">12</div>
<div class="t" style="left:31px;top:614px;font-size:11.5px;line-height:13px;color:#333;letter-spacing:0.6px;white-space:nowrap">Bick unslood<br>cout</div>
<div class="t" style="left:132px;top:616px;font-size:11.5px;color:#333;letter-spacing:0.3px">Polgos</div>
<div class="t" style="left:209px;top:616px;font-size:11.5px;color:#352c22;letter-spacing:0.2px">Corter tavients</div>
<div class="t" style="left:430px;top:614px;font-size:11px;line-height:13px;color:#32291f;white-space:nowrap">Periclcved invenric rcerded<br>of Ond up teay</div>
<div class="t" style="left:642px;width:200px;text-align:right;top:616px;font-size:12.5px;color:#f6faf2;letter-spacing:-0.5px;-webkit-text-stroke:0.35px #fff">1.25</div>
<div class="t" style="left:787px;width:200px;text-align:right;top:616px;font-size:12.5px;color:#fdf4ea;letter-spacing:-0.5px;-webkit-text-stroke:0.35px #fff">2.86</div>
<div class="a" style="left:0px;top:645px;width:27px;height:27px;background:#d7dadd;"></div>
<div class="a" style="left:0px;top:645px;width:27px;height:1px;background:#a6abb0;"></div>
<div class="t" style="left:8px;top:653px;font-size:11px;color:#3a3f45;">13</div>
<div class="t" style="left:31px;top:654px;font-size:11.5px;color:#333;letter-spacing:0.6px">Echolealle</div>
<div class="t" style="left:132px;top:654px;font-size:11.5px;color:#333;letter-spacing:0.3px">Colgos</div>
<div class="t" style="left:209px;top:654px;font-size:11.5px;color:#352c22;letter-spacing:0.2px">Contiing sreies</div>
<div class="t" style="left:430px;top:654px;font-size:11px;color:#32291f;">Dericlered inventry weske'</div>
<div class="t" style="left:642px;width:200px;text-align:right;top:653px;font-size:12.5px;color:#f6faf2;letter-spacing:-0.5px;-webkit-text-stroke:0.35px #fff">4.39</div>
<div class="t" style="left:787px;width:200px;text-align:right;top:653px;font-size:12.5px;color:#fdf4ea;letter-spacing:-0.5px;-webkit-text-stroke:0.35px #fff">2.06</div>
<div class="a" style="left:0px;top:672px;width:27px;height:34px;background:#d7dadd;"></div>
<div class="a" style="left:0px;top:672px;width:27px;height:1px;background:#a6abb0;"></div>
<div class="t" style="left:8px;top:683px;font-size:11px;color:#3a3f45;">13</div>
<div class="t" style="left:31px;top:681px;font-size:11.5px;color:#333;letter-spacing:0.6px">Complies</div>
<div class="t" style="left:132px;top:681px;font-size:11.5px;color:#333;letter-spacing:0.3px">Colgos</div>
<div class="t" style="left:209px;top:681px;font-size:11.5px;color:#352c22;letter-spacing:0.2px">Conting of pyecal</div>
<div class="t" style="left:430px;top:679px;font-size:11px;line-height:13px;color:#32291f;white-space:nowrap">Uesdicered invenriot recended<br>negpoy</div>
<div class="t" style="left:642px;width:200px;text-align:right;top:681px;font-size:12.5px;color:#f6faf2;letter-spacing:-0.5px;-webkit-text-stroke:0.35px #fff">27</div>
<div class="t" style="left:787px;width:200px;text-align:right;top:681px;font-size:12.5px;color:#fdf4ea;letter-spacing:-0.5px;-webkit-text-stroke:0.35px #fff">2.47</div>
<div class="a" style="left:0px;top:706px;width:27px;height:34px;background:#d7dadd;"></div>
<div class="a" style="left:0px;top:706px;width:27px;height:1px;background:#a6abb0;"></div>
<div class="t" style="left:8px;top:717px;font-size:11px;color:#3a3f45;">17</div>
<div class="t" style="left:31px;top:715px;font-size:11.5px;color:#333;letter-spacing:0.6px">CarterWek</div>
<div class="t" style="left:132px;top:715px;font-size:11.5px;color:#333;letter-spacing:0.3px">Colgos</div>
<div class="t" style="left:209px;top:715px;font-size:11.5px;color:#352c22;letter-spacing:0.2px">Contiing sraies</div>
<div class="t" style="left:430px;top:713px;font-size:11px;line-height:13px;color:#32291f;white-space:nowrap">Periclcved invenrics recerved<br>cek typlrfits</div>
<div class="t" style="left:642px;width:200px;text-align:right;top:715px;font-size:12.5px;color:#f6faf2;letter-spacing:-0.5px;-webkit-text-stroke:0.35px #fff">26</div>
<div class="t" style="left:787px;width:200px;text-align:right;top:715px;font-size:12.5px;color:#fdf4ea;letter-spacing:-0.5px;-webkit-text-stroke:0.35px #fff">1.29</div>
<div class="a" style="left:0px;top:740px;width:27px;height:29px;background:#d7dadd;"></div>
<div class="a" style="left:0px;top:740px;width:27px;height:1px;background:#a6abb0;"></div>
<div class="t" style="left:8px;top:749px;font-size:11px;color:#3a3f45;">13</div>
<div class="t" style="left:31px;top:750px;font-size:11.5px;color:#333;letter-spacing:0.6px">Cretefiits</div>
<div class="t" style="left:132px;top:750px;font-size:11.5px;color:#333;letter-spacing:0.3px">Colgos</div>
<div class="t" style="left:209px;top:750px;font-size:11.5px;color:#352c22;letter-spacing:0.2px">Conting of itealies</div>
<div class="t" style="left:430px;top:750px;font-size:11px;color:#32291f;">Pesiclered invenoic reeale'</div>
<div class="t" style="left:642px;width:200px;text-align:right;top:749px;font-size:12.5px;color:#f6faf2;letter-spacing:-0.5px;-webkit-text-stroke:0.35px #fff">22</div>
<div class="t" style="left:787px;width:200px;text-align:right;top:749px;font-size:12.5px;color:#fdf4ea;letter-spacing:-0.5px;-webkit-text-stroke:0.35px #fff">2.39</div>
<div class="a" style="left:0px;top:769px;width:27px;height:30px;background:#d7dadd;"></div>
<div class="a" style="left:0px;top:769px;width:27px;height:1px;background:#a6abb0;"></div>
<div class="t" style="left:8px;top:778px;font-size:11px;color:#3a3f45;">17</div>
<div class="t" style="left:31px;top:780px;font-size:11.5px;color:#333;letter-spacing:0.6px">Peract Sits</div>
<div class="t" style="left:132px;top:780px;font-size:11.5px;color:#333;letter-spacing:0.3px">Colgos</div>
<div class="t" style="left:209px;top:780px;font-size:11.5px;color:#352c22;letter-spacing:0.2px">Contame cnies</div>
<div class="t" style="left:430px;top:779px;font-size:11px;color:#32291f;">Uesidlered invenric reeale'</div>
<div class="t" style="left:642px;width:200px;text-align:right;top:779px;font-size:12.5px;color:#f6faf2;letter-spacing:-0.5px;-webkit-text-stroke:0.35px #fff">22</div>
<div class="t" style="left:787px;width:200px;text-align:right;top:779px;font-size:12.5px;color:#fdf4ea;letter-spacing:-0.5px;-webkit-text-stroke:0.35px #fff">2.27</div>
<div class="a" style="left:0px;top:799px;width:27px;height:35px;background:#d7dadd;"></div>
<div class="a" style="left:0px;top:799px;width:27px;height:1px;background:#a6abb0;"></div>
<div class="t" style="left:8px;top:811px;font-size:11px;color:#3a3f45;">19</div>
<div class="t" style="left:31px;top:808px;font-size:11.5px;color:#333;letter-spacing:0.6px">Audocoters</div>
<div class="t" style="left:132px;top:808px;font-size:11.5px;color:#333;letter-spacing:0.3px">Polgos</div>
<div class="t" style="left:209px;top:808px;font-size:11.5px;color:#352c22;letter-spacing:0.2px">Contelg of ibanted</div>
<div class="t" style="left:430px;top:806px;font-size:11px;line-height:13px;color:#32291f;white-space:nowrap">Periclcved invenriot erterred<br>d cre of ydots</div>
<div class="t" style="left:642px;width:200px;text-align:right;top:808px;font-size:12.5px;color:#f6faf2;letter-spacing:-0.5px;-webkit-text-stroke:0.35px #fff">18</div>
<div class="t" style="left:787px;width:200px;text-align:right;top:808px;font-size:12.5px;color:#fdf4ea;letter-spacing:-0.5px;-webkit-text-stroke:0.35px #fff">4.28</div>
<div class="a" style="left:0px;top:834px;width:27px;height:26px;background:#d7dadd;"></div>
<div class="a" style="left:0px;top:834px;width:27px;height:1px;background:#a6abb0;"></div>
<div class="t" style="left:8px;top:841px;font-size:11px;color:#3a3f45;">19</div>
<div class="t" style="left:31px;top:843px;font-size:11.5px;color:#333;letter-spacing:0.6px">Pettetins</div>
<div class="t" style="left:132px;top:843px;font-size:11.5px;color:#333;letter-spacing:0.3px">Colgos</div>
<div class="t" style="left:209px;top:843px;font-size:11.5px;color:#352c22;letter-spacing:0.2px">Contaited insyles</div>
<div class="t" style="left:430px;top:842px;font-size:11px;color:#32291f;">Pesicllered invenriot weske'</div>
<div class="t" style="left:642px;width:200px;text-align:right;top:842px;font-size:12.5px;color:#f6faf2;letter-spacing:-0.5px;-webkit-text-stroke:0.35px #fff">30</div>
<div class="t" style="left:787px;width:200px;text-align:right;top:842px;font-size:12.5px;color:#fdf4ea;letter-spacing:-0.5px;-webkit-text-stroke:0.35px #fff">1.34</div>
<div class="a" style="left:0px;top:860px;width:27px;height:29px;background:#d7dadd;"></div>
<div class="a" style="left:0px;top:860px;width:27px;height:1px;background:#a6abb0;"></div>
<div class="t" style="left:8px;top:869px;font-size:11px;color:#3a3f45;">19</div>
<div class="t" style="left:31px;top:870px;font-size:11.5px;color:#333;letter-spacing:0.6px">Conpless</div>
<div class="t" style="left:132px;top:870px;font-size:11.5px;color:#333;letter-spacing:0.3px">Colgos</div>
<div class="t" style="left:209px;top:870px;font-size:11.5px;color:#352c22;letter-spacing:0.2px">Conteingg frarries</div>
<div class="t" style="left:430px;top:864px;font-size:11px;line-height:13px;color:#32291f;white-space:nowrap">Periclcved invenroit relecaved<br>Cargeodtiery</div>
<div class="t" style="left:642px;width:200px;text-align:right;top:869px;font-size:12.5px;color:#f6faf2;letter-spacing:-0.5px;-webkit-text-stroke:0.35px #fff">28</div>
<div class="t" style="left:787px;width:200px;text-align:right;top:869px;font-size:12.5px;color:#fdf4ea;letter-spacing:-0.5px;-webkit-text-stroke:0.35px #fff">2.87</div>
<div class="a" style="left:0px;top:889px;width:27px;height:27px;background:#d7dadd;"></div>
<div class="a" style="left:0px;top:889px;width:27px;height:1px;background:#a6abb0;"></div>
<div class="t" style="left:8px;top:897px;font-size:11px;color:#3a3f45;">17</div>
<div class="t" style="left:31px;top:898px;font-size:11.5px;color:#333;letter-spacing:0.6px">Tempiess</div>
<div class="t" style="left:132px;top:898px;font-size:11.5px;color:#333;letter-spacing:0.3px">Colgos</div>
<div class="t" style="left:209px;top:898px;font-size:11.5px;color:#352c22;letter-spacing:0.2px">Conteioed nayies</div>
<div class="t" style="left:430px;top:898px;font-size:11px;color:#32291f;">Pericleved inventive weske'</div>
<div class="t" style="left:642px;width:200px;text-align:right;top:897px;font-size:12.5px;color:#f6faf2;letter-spacing:-0.5px;-webkit-text-stroke:0.35px #fff">22</div>
<div class="t" style="left:787px;width:200px;text-align:right;top:897px;font-size:12.5px;color:#fdf4ea;letter-spacing:-0.5px;-webkit-text-stroke:0.35px #fff">2.68</div>
<div class="a" style="left:0px;top:916px;width:27px;height:27px;background:#d7dadd;"></div>
<div class="a" style="left:0px;top:916px;width:27px;height:1px;background:#a6abb0;"></div>
<div class="t" style="left:8px;top:924px;font-size:11px;color:#3a3f45;">23</div>
<div class="t" style="left:31px;top:925px;font-size:11.5px;color:#333;letter-spacing:0.6px">Conplitins</div>
<div class="t" style="left:132px;top:925px;font-size:11.5px;color:#333;letter-spacing:0.3px">Colgos</div>
<div class="t" style="left:209px;top:925px;font-size:11.5px;color:#352c22;letter-spacing:0.2px">Contelocy fayies</div>
<div class="t" style="left:430px;top:920px;font-size:11px;line-height:13px;color:#32291f;white-space:nowrap">Periclcved invenriove recerced<br>congiobes</div>
<div class="t" style="left:642px;width:200px;text-align:right;top:924px;font-size:12.5px;color:#f6faf2;letter-spacing:-0.5px;-webkit-text-stroke:0.35px #fff">25</div>
<div class="t" style="left:787px;width:200px;text-align:right;top:924px;font-size:12.5px;color:#fdf4ea;letter-spacing:-0.5px;-webkit-text-stroke:0.35px #fff">1.24</div>
<div class="a" style="left:0px;top:943px;width:27px;height:27px;background:#d7dadd;"></div>
<div class="a" style="left:0px;top:943px;width:27px;height:1px;background:#a6abb0;"></div>
<div class="t" style="left:8px;top:951px;font-size:11px;color:#3a3f45;">22</div>
<div class="t" style="left:31px;top:952px;font-size:11.5px;color:#333;letter-spacing:0.6px">Practice</div>
<div class="t" style="left:132px;top:952px;font-size:11.5px;color:#333;letter-spacing:0.3px">Colgos</div>
<div class="t" style="left:209px;top:952px;font-size:11.5px;color:#352c22;letter-spacing:0.2px">Aumowerd Teryies</div>
<div class="t" style="left:430px;top:952px;font-size:11px;color:#32291f;">Percdiwed inventive weske'</div>
<div class="t" style="left:642px;width:200px;text-align:right;top:951px;font-size:12.5px;color:#f6faf2;letter-spacing:-0.5px;-webkit-text-stroke:0.35px #fff">17</div>
<div class="t" style="left:787px;width:200px;text-align:right;top:951px;font-size:12.5px;color:#fdf4ea;letter-spacing:-0.5px;-webkit-text-stroke:0.35px #fff">2.47</div>
<div class="a" style="left:0px;top:970px;width:27px;height:27px;background:#d7dadd;"></div>
<div class="a" style="left:0px;top:970px;width:27px;height:1px;background:#a6abb0;"></div>
<div class="t" style="left:8px;top:978px;font-size:11px;color:#3a3f45;">27</div>
<div class="t" style="left:31px;top:979px;font-size:11.5px;color:#333;letter-spacing:0.6px">Canplets</div>
<div class="t" style="left:132px;top:979px;font-size:11.5px;color:#333;letter-spacing:0.3px">Colgos</div>
<div class="t" style="left:209px;top:979px;font-size:11.5px;color:#352c22;letter-spacing:0.2px">Contene of aayies</div>
<div class="t" style="left:430px;top:979px;font-size:11px;color:#32291f;">Uesolcved invenroic weske'</div>
<div class="t" style="left:642px;width:200px;text-align:right;top:978px;font-size:12.5px;color:#f6faf2;letter-spacing:-0.5px;-webkit-text-stroke:0.35px #fff">32</div>
<div class="t" style="left:875px;width:200px;text-align:center;top:978px;font-size:12.5px;color:#fdf4ea;letter-spacing:-0.5px;-webkit-text-stroke:0.35px #fff">9.8</div>
<div class="a" style="left:0px;top:997px;width:27px;height:27px;background:#d7dadd;"></div>
<div class="a" style="left:0px;top:997px;width:27px;height:1px;background:#a6abb0;"></div>
<div class="t" style="left:8px;top:1005px;font-size:11px;color:#3a3f45;">23</div>
<div class="t" style="left:31px;top:1006px;font-size:11.5px;color:#333;letter-spacing:0.6px">Pattetices</div>
<div class="t" style="left:132px;top:1006px;font-size:11.5px;color:#333;letter-spacing:0.3px">Colgos</div>
<div class="t" style="left:209px;top:1006px;font-size:11.5px;color:#352c22;letter-spacing:0.2px">Conteired inyies</div>
<div class="t" style="left:430px;top:1001px;font-size:11px;line-height:13px;color:#32291f;white-space:nowrap">Percdiwed inventric reseales'<br>oonpenest inpirr</div>
<div class="t" style="left:642px;width:200px;text-align:right;top:1005px;font-size:12.5px;color:#f6faf2;letter-spacing:-0.5px;-webkit-text-stroke:0.35px #fff">17</div>
<div class="t" style="left:875px;width:200px;text-align:center;top:1005px;font-size:12.5px;color:#fdf4ea;letter-spacing:-0.5px;-webkit-text-stroke:0.35px #fff">47</div>
<div class="a" style="left:27px;top:579px;width:177px;height:1.2px;background:#777a7d;"></div>
<div class="a" style="left:204px;top:579px;width:518px;height:1.3px;background:#9a7552;"></div>
<div class="a" style="left:722px;top:579px;width:146px;height:1.3px;background:#4e7d47;"></div>
<div class="a" style="left:868px;top:579px;width:141px;height:1.3px;background:#8a6a45;"></div>
<div class="a" style="left:27px;top:607px;width:177px;height:1.2px;background:#777a7d;"></div>
<div class="a" style="left:204px;top:607px;width:518px;height:1.3px;background:#9a7552;"></div>
<div class="a" style="left:722px;top:607px;width:146px;height:1.3px;background:#4e7d47;"></div>
<div class="a" style="left:868px;top:607px;width:141px;height:1.3px;background:#8a6a45;"></div>
<div class="a" style="left:27px;top:645px;width:177px;height:1.2px;background:#777a7d;"></div>
<div class="a" style="left:204px;top:645px;width:518px;height:1.3px;background:#9a7552;"></div>
<div class="a" style="left:722px;top:645px;width:146px;height:1.3px;background:#4e7d47;"></div>
<div class="a" style="left:868px;top:645px;width:141px;height:1.3px;background:#8a6a45;"></div>
<div class="a" style="left:27px;top:672px;width:177px;height:1.2px;background:#777a7d;"></div>
<div class="a" style="left:204px;top:672px;width:518px;height:1.3px;background:#9a7552;"></div>
<div class="a" style="left:722px;top:672px;width:146px;height:1.3px;background:#4e7d47;"></div>
<div class="a" style="left:868px;top:672px;width:141px;height:1.3px;background:#8a6a45;"></div>
<div class="a" style="left:27px;top:706px;width:177px;height:1.2px;background:#777a7d;"></div>
<div class="a" style="left:204px;top:706px;width:518px;height:1.3px;background:#9a7552;"></div>
<div class="a" style="left:722px;top:706px;width:146px;height:1.3px;background:#4e7d47;"></div>
<div class="a" style="left:868px;top:706px;width:141px;height:1.3px;background:#8a6a45;"></div>
<div class="a" style="left:27px;top:740px;width:177px;height:1.2px;background:#777a7d;"></div>
<div class="a" style="left:204px;top:740px;width:518px;height:1.3px;background:#9a7552;"></div>
<div class="a" style="left:722px;top:740px;width:146px;height:1.3px;background:#4e7d47;"></div>
<div class="a" style="left:868px;top:740px;width:141px;height:1.3px;background:#8a6a45;"></div>
<div class="a" style="left:27px;top:769px;width:177px;height:1.2px;background:#777a7d;"></div>
<div class="a" style="left:204px;top:769px;width:518px;height:1.3px;background:#9a7552;"></div>
<div class="a" style="left:722px;top:769px;width:146px;height:1.3px;background:#4e7d47;"></div>
<div class="a" style="left:868px;top:769px;width:141px;height:1.3px;background:#8a6a45;"></div>
<div class="a" style="left:27px;top:799px;width:177px;height:1.2px;background:#777a7d;"></div>
<div class="a" style="left:204px;top:799px;width:518px;height:1.3px;background:#9a7552;"></div>
<div class="a" style="left:722px;top:799px;width:146px;height:1.3px;background:#4e7d47;"></div>
<div class="a" style="left:868px;top:799px;width:141px;height:1.3px;background:#8a6a45;"></div>
<div class="a" style="left:27px;top:834px;width:177px;height:1.2px;background:#777a7d;"></div>
<div class="a" style="left:204px;top:834px;width:518px;height:1.3px;background:#9a7552;"></div>
<div class="a" style="left:722px;top:834px;width:146px;height:1.3px;background:#4e7d47;"></div>
<div class="a" style="left:868px;top:834px;width:141px;height:1.3px;background:#8a6a45;"></div>
<div class="a" style="left:27px;top:860px;width:177px;height:1.2px;background:#777a7d;"></div>
<div class="a" style="left:204px;top:860px;width:518px;height:1.3px;background:#9a7552;"></div>
<div class="a" style="left:722px;top:860px;width:146px;height:1.3px;background:#4e7d47;"></div>
<div class="a" style="left:868px;top:860px;width:141px;height:1.3px;background:#8a6a45;"></div>
<div class="a" style="left:27px;top:889px;width:177px;height:1.2px;background:#777a7d;"></div>
<div class="a" style="left:204px;top:889px;width:518px;height:1.3px;background:#9a7552;"></div>
<div class="a" style="left:722px;top:889px;width:146px;height:1.3px;background:#4e7d47;"></div>
<div class="a" style="left:868px;top:889px;width:141px;height:1.3px;background:#8a6a45;"></div>
<div class="a" style="left:27px;top:916px;width:177px;height:1.2px;background:#777a7d;"></div>
<div class="a" style="left:204px;top:916px;width:518px;height:1.3px;background:#9a7552;"></div>
<div class="a" style="left:722px;top:916px;width:146px;height:1.3px;background:#4e7d47;"></div>
<div class="a" style="left:868px;top:916px;width:141px;height:1.3px;background:#8a6a45;"></div>
<div class="a" style="left:27px;top:943px;width:177px;height:1.2px;background:#777a7d;"></div>
<div class="a" style="left:204px;top:943px;width:518px;height:1.3px;background:#9a7552;"></div>
<div class="a" style="left:722px;top:943px;width:146px;height:1.3px;background:#4e7d47;"></div>
<div class="a" style="left:868px;top:943px;width:141px;height:1.3px;background:#8a6a45;"></div>
<div class="a" style="left:27px;top:970px;width:177px;height:1.2px;background:#777a7d;"></div>
<div class="a" style="left:204px;top:970px;width:518px;height:1.3px;background:#9a7552;"></div>
<div class="a" style="left:722px;top:970px;width:146px;height:1.3px;background:#4e7d47;"></div>
<div class="a" style="left:868px;top:970px;width:141px;height:1.3px;background:#8a6a45;"></div>
<div class="a" style="left:27px;top:997px;width:177px;height:1.2px;background:#777a7d;"></div>
<div class="a" style="left:204px;top:997px;width:518px;height:1.3px;background:#9a7552;"></div>
<div class="a" style="left:722px;top:997px;width:146px;height:1.3px;background:#4e7d47;"></div>
<div class="a" style="left:868px;top:997px;width:141px;height:1.3px;background:#8a6a45;"></div>
<div class="a" style="left:27px;top:552px;width:1.2px;height:472px;background:#6d7074;"></div>
<div class="a" style="left:127px;top:552px;width:1.2px;height:472px;background:#6d7074;"></div>
<div class="a" style="left:204px;top:552px;width:1.2px;height:472px;background:#5a4a3c;"></div>
<div class="a" style="left:425px;top:552px;width:1.2px;height:472px;background:#5a4a3c;"></div>
<div class="a" style="left:590px;top:552px;width:1.2px;height:472px;background:#5a4a3c;"></div>
<div class="a" style="left:722px;top:552px;width:1.2px;height:472px;background:#4a5a40;"></div>
<div class="a" style="left:868px;top:552px;width:1.2px;height:472px;background:#4a5a40;"></div>
<div class="a" style="left:1008px;top:552px;width:1.5px;height:472px;background:#3a3530;"></div>
<div class="a" style="left:27px;top:551px;width:982px;height:2px;background:#252b33;"></div>
</body></html>
